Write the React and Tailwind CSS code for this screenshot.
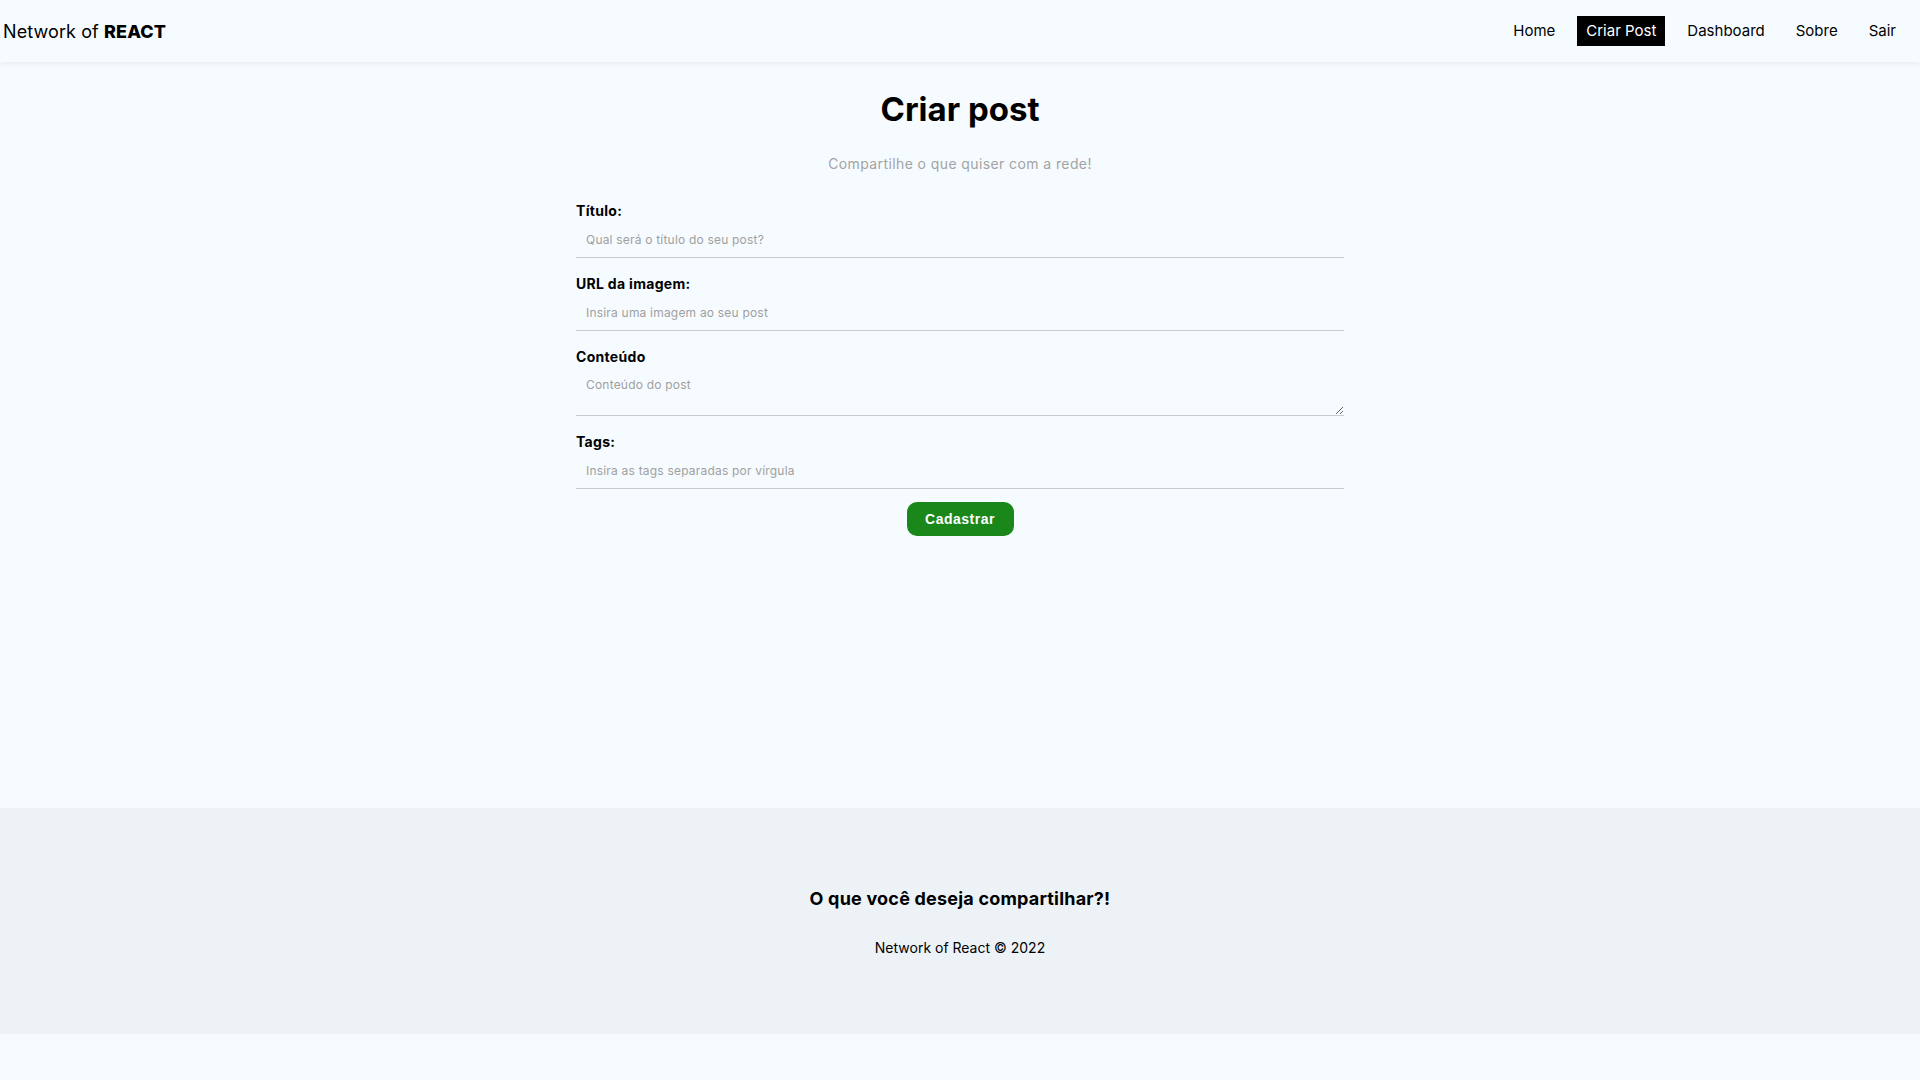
import React, { useState } from "react";

const links = ["Home", "Criar Post", "Dashboard", "Sobre", "Sair"];

const Field = ({ label, placeholder, textarea, last }) => (
  <label className={`flex flex-col ${last ? "mb-[13px]" : "mb-[17px]"}`}>
    <span className="text-[14px] leading-[17px] font-bold tracking-[0.3px] text-black">{label}</span>
    {textarea ? (
      <textarea
        placeholder={placeholder}
        className="mt-[3px] h-[48px] px-[10px] pt-[10px] text-[12px] leading-[14px] tracking-[0.2px] bg-transparent border-b border-[#cccccc] outline-none placeholder:text-[#a0a0a0]"
      />
    ) : (
      <input
        placeholder={placeholder}
        className="mt-[3px] h-[36px] px-[10px] text-[12px] tracking-[0.2px] bg-transparent border-b border-[#cccccc] outline-none placeholder:text-[#a0a0a0]"
      />
    )}
  </label>
);

export default function App() {
  const [active] = useState("Criar Post");

  return (
    <div className="min-h-screen bg-[#f6fbff] text-black font-['Inter',sans-serif]">
      <nav className="h-[62px] flex items-center justify-between pl-[3px] pr-[15px] shadow-[0_2px_6px_rgba(0,0,0,0.06)] relative">
        <div className="text-[18px] tracking-[0.1px]">
          Network of <span className="font-extrabold">REACT</span>
        </div>
        <ul className="flex items-center gap-[13px]">
          {links.map((l) => (
            <li
              key={l}
              className={`text-[15px] px-[9px] py-[4px] ${
                active === l ? "bg-black text-white" : "text-black"
              }`}
            >
              {l}
            </li>
          ))}
        </ul>
      </nav>

      <main className="min-h-[746px] flex flex-col items-center">
        <h1 className="mt-[27px] text-[33px] leading-[40px] font-bold">Criar post</h1>
        <p className="mt-[25px] text-[14px] leading-[20px] tracking-[0.4px] text-[#a3a3a3]">
          Compartilhe o que quiser com a rede!
        </p>
        <form className="mt-[28px] w-[768px] flex flex-col">
          <Field label="Título:" placeholder="Qual será o título do seu post?" />
          <Field label="URL da imagem:" placeholder="Insira uma imagem ao seu post" />
          <Field label="Conteúdo" placeholder="Conteúdo do post" textarea />
          <Field label="Tags:" placeholder="Insira as tags separadas por vírgula" last />
          <button
            type="button"
            className="self-center w-[107px] h-[34px] rounded-[10px] bg-[#1a871a] text-white text-[14px] font-bold tracking-[0.5px] font-['Liberation_Sans',sans-serif]"
          >
            Cadastrar
          </button>
        </form>
      </main>

      <footer className="h-[226px] bg-[#edf2f7] flex flex-col items-center justify-center">
        <h3 className="text-[18px] font-bold tracking-[0.2px]">O que você deseja compartilhar?!</h3>
        <p className="mt-[25px] text-[14px]">Network of React © 2022</p>
      </footer>
    </div>
  );
}
